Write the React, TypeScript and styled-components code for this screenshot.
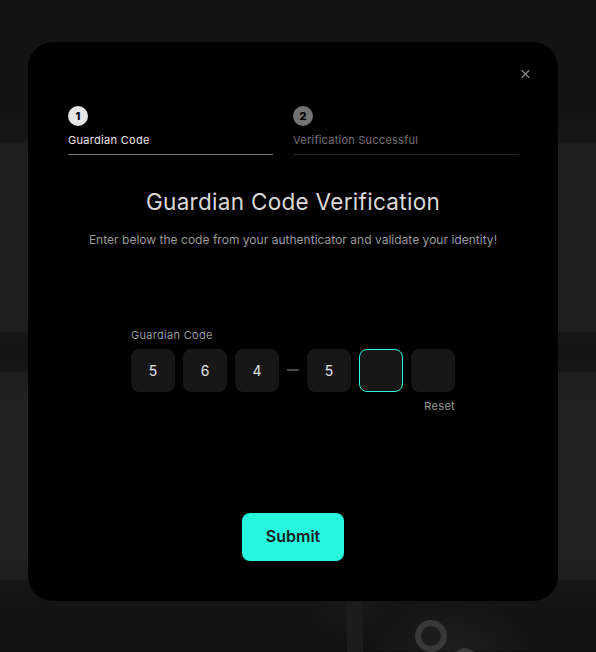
import React from 'react';
import styled, { createGlobalStyle } from 'styled-components';

const GlobalStyle = createGlobalStyle`
  * { box-sizing: border-box; }
  body {
    margin: 0;
    background: #121212;
    font-family: Inter, "Liberation Sans", sans-serif;
    overflow: hidden;
  }
  button { font-family: inherit; border: 0; padding: 0; background: none; cursor: pointer; }
`;

const Page = styled.main`
  position: relative;
  width: 596px;
  height: 652px;
  padding: 42px 38px 0 28px;
  overflow: hidden;
  background: linear-gradient(
    #131313 0, #131313 110px, #171717 143px,
    #1d1d1d 143px, #202020 160px, #202020 315px, #1d1d1d 332px,
    #161616 332px, #131313 352px, #161616 372px,
    #1d1d1d 372px, #212121 400px, #212121 555px, #1d1d1d 580px,
    #161616 580px, #131313 605px, #131313 650px, #0e0e0e 651px
  );
`;

const Backdrop = styled.svg`
  position: absolute;
  left: 300px;
  top: 580px;
`;

const Dialog = styled.section`
  position: relative;
  width: 530px;
  height: 559px;
  padding: 64px 40px 0;
  border-radius: 25px;
  background: #000;
  display: flex;
  flex-direction: column;
  align-items: center;
`;

const Close = styled.button`
  position: absolute;
  top: 28px;
  right: 28px;
  width: 9px;
  height: 8px;
  display: flex;
`;

const Steps = styled.div`
  width: 450px;
  display: grid;
  grid-template-columns: 205px 225px;
  column-gap: 20px;
`;

const Step = styled.div<{ $active?: boolean }>`
  height: 49px;
  border-bottom: 1px solid ${p => (p.$active ? '#777976' : '#272727')};
  color: ${p => (p.$active ? '#e4e4e4' : '#737373')};
`;

const StepNumber = styled.div<{ $active?: boolean }>`
  width: 20px;
  height: 20px;
  border-radius: 50%;
  background: ${p => (p.$active ? '#e6e6e6' : '#737373')};
  color: #000;
  font-size: 11px;
  font-weight: 800;
  line-height: 20px;
  text-align: center;
`;

const StepLabel = styled.div<{ $spacing: number }>`
  margin-top: 6px;
  font-size: 11px;
  line-height: 16px;
  letter-spacing: ${p => p.$spacing}px;
  white-space: nowrap;
`;

const Title = styled.h1`
  margin: 31px 0 0;
  height: 32px;
  font-size: 22.5px;
  font-weight: 400;
  line-height: 32px;
  letter-spacing: 0.3px;
  color: #dadada;
  white-space: nowrap;
`;

const Subtitle = styled.p`
  margin: 13px 0 0;
  font-size: 12px;
  line-height: 18px;
  letter-spacing: 0.02px;
  color: #999;
  white-space: nowrap;
`;

const CodeField = styled.div`
  width: 324px;
  margin-top: 78px;
  display: flex;
  flex-direction: column;
`;

const FieldLabel = styled.label`
  height: 16px;
  font-size: 11px;
  line-height: 16px;
  letter-spacing: 0.3px;
  color: #999;
`;

const Cells = styled.div`
  margin-top: 6px;
  display: flex;
  align-items: center;
  gap: 8px;
`;

const Cell = styled.div<{ $focused?: boolean }>`
  width: 44px;
  height: 43px;
  border-radius: 8px;
  border: 1px solid ${p => (p.$focused ? '#26f5df' : '#171717')};
  background: #171717;
  color: #e4e4e4;
  font-size: 14px;
  line-height: 42px;
  text-align: center;
`;

const Dash = styled.span`
  width: 12px;
  height: 2px;
  margin-bottom: 2px;
  background: #484848;
`;

const Reset = styled.button`
  align-self: flex-end;
  margin-top: 6px;
  height: 16px;
  font-size: 11px;
  line-height: 16px;
  letter-spacing: 0.3px;
  color: #999;
`;

const Submit = styled.button`
  width: 102px;
  height: 48px;
  margin-top: 99px;
  padding-bottom: 2px;
  border-radius: 8px;
  background: #26f8df;
  color: #141f1d;
  font-size: 16px;
  font-weight: 600;
  line-height: 46px;
`;

const code = ['5', '6', '4', '-', '5', '', ''];

export default function App() {
  return (
    <Page>
      <GlobalStyle />
      <Backdrop width="296" height="72" viewBox="0 0 296 72">
        <defs>
          <radialGradient id="glow">
            <stop offset="0" stopColor="#fff" stopOpacity="0.05" />
            <stop offset="1" stopColor="#fff" stopOpacity="0" />
          </radialGradient>
        </defs>
        <ellipse cx="54" cy="20" rx="48" ry="42" fill="url(#glow)" opacity="0.5" />
        <ellipse cx="150" cy="72" rx="80" ry="58" fill="url(#glow)" />
        <rect x="47" y="20" width="16" height="52" fill="#1c1c1c" />
        <circle cx="131" cy="56" r="13" fill="#1c1c1c" stroke="#383838" strokeWidth="6" />
        <path d="M155 72 L161 69 Q165 67 169 69 L175 72 Z" fill="#3a3a3a" />
      </Backdrop>
      <Dialog role="dialog">
        <Close aria-label="Close">
          <svg width="9" height="8" viewBox="0 0 9 8">
            <path d="M.7.3 8.3 7.7M8.3.3.7 7.7" stroke="#808080" strokeWidth="1.5" />
          </svg>
        </Close>
        <Steps>
          <Step $active>
            <StepNumber $active>1</StepNumber>
            <StepLabel $spacing={0.3}>Guardian Code</StepLabel>
          </Step>
          <Step>
            <StepNumber>2</StepNumber>
            <StepLabel $spacing={0.24}>Verification Successful</StepLabel>
          </Step>
        </Steps>
        <Title>Guardian Code Verification</Title>
        <Subtitle>Enter below the code from your authenticator and validate your identity!</Subtitle>
        <CodeField>
          <FieldLabel>Guardian Code</FieldLabel>
          <Cells>
            {code.map((c, i) => (c === '-' ? <Dash key={i} /> : <Cell key={i} $focused={i === 5}>{c}</Cell>))}
          </Cells>
          <Reset>Reset</Reset>
        </CodeField>
        <Submit>Submit</Submit>
      </Dialog>
    </Page>
  );
}
